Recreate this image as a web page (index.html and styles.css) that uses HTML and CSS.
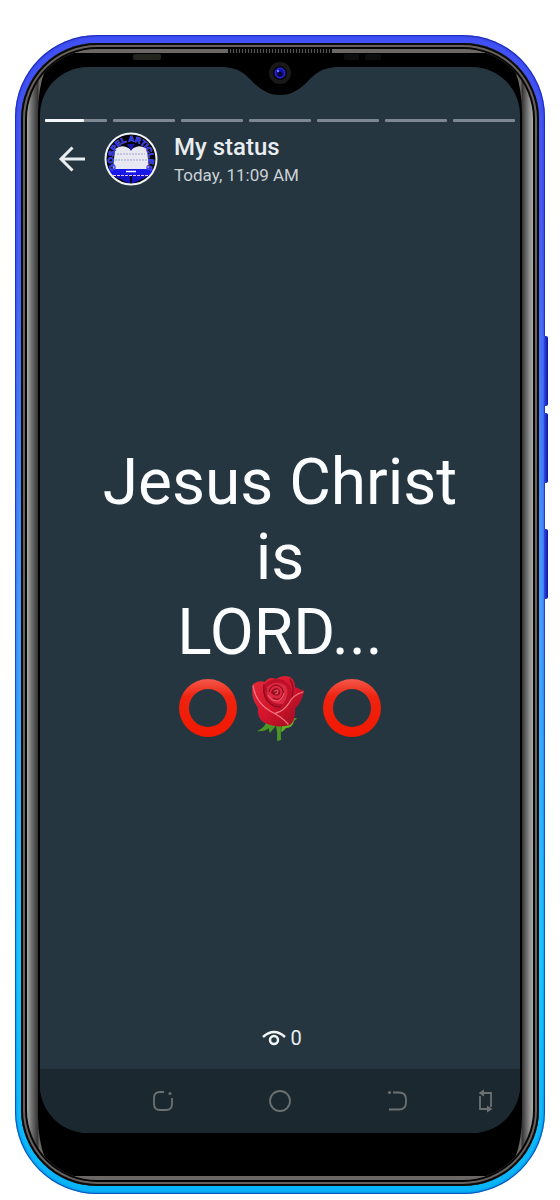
FILE: index.html
```
<!DOCTYPE html>
<html lang="en">
<head>
    <meta charset="UTF-8">
    <meta name="viewport" content="width=device-width, initial-scale=1.0">
    <title>My status</title>
    <link rel="stylesheet" href="styles.css">
</head>
<body>
    <div class="phone">
        <span class="side-key volume-up"></span>
        <span class="side-key volume-down"></span>
        <span class="side-key power"></span>
        <div class="rim">
            <div class="bezel">
                <div class="glass">
                    <div class="screen">
                        <div class="progress">
                            <span class="segment"><span class="fill" style="width: 63%"></span></span>
                            <span class="segment"></span>
                            <span class="segment"></span>
                            <span class="segment"></span>
                            <span class="segment"></span>
                            <span class="segment"></span>
                            <span class="segment"></span>
                        </div>

                        <header class="header">
                            <button class="back" aria-label="Back">
                                <svg width="28" height="28" viewBox="0 0 28 28" fill="none" stroke="#e9edef" stroke-width="3">
                                    <path d="M14.5 2.500 3 14l11.500 11.500M3 14h24"/>
                                </svg>
                            </button>
                            <svg class="avatar" width="54" height="54" viewBox="0 0 54 54">
                                <defs>
                                    <clipPath id="disc"><circle cx="27" cy="27" r="25"/></clipPath>
                                    <path id="arc" d="M14.600 39.400A17.500 17.500 0 1 1 39.400 39.400"/>
                                </defs>
                                <g clip-path="url(#disc)">
                                    <rect width="54" height="54" fill="#05050f"/>
                                    <path d="M11 17q8-6 16 1 8-7 16-1l2 20H9z" fill="#e8e8f2"/>
                                    <path d="M23 12h8l-4 7z" fill="#1518a8"/>
                                    <path d="M13 22h28M11 28h32" stroke="#9fa1cc" stroke-dasharray="2 1"/>
                                    <path d="M3 37h48v6H3z" fill="#1717e8"/>
                                    <path d="M8 43h18v9zM46 43H28v9z" fill="#1212c8"/>
                                    <path d="M22 39.500h10" stroke="#fff" stroke-width="1.500"/>
                                    <path d="M9 43.500h36" stroke="#e0bde8" stroke-dasharray="3 1"/>
                                </g>
                                <text class="avatar-text"><textPath href="#arc" startOffset="50%">GOSPEL ARTICLES</textPath></text>
                                <circle cx="27" cy="27" r="25.500" fill="none" stroke="#f0f3f5" stroke-width="2"/>
                            </svg>
                            <div class="titles">
                                <h1>My status</h1>
                                <p>Today, 11:09 AM</p>
                            </div>
                        </header>

                        <main class="message">
                            <p>Jesus Christ<br>is<br>LORD...</p>
                            <div class="emoji">
                                <svg width="58" height="58" viewBox="0 0 58 58">
                                    <defs>
                                        <linearGradient id="ring" x2="0" y2="1">
                                            <stop offset="0" stop-color="#f4584a"/>
                                            <stop offset=".3" stop-color="#ee2410"/>
                                            <stop offset="1" stop-color="#f21800"/>
                                        </linearGradient>
                                    </defs>
                                    <path fill="url(#ring)" fill-rule="evenodd" d="M29 0a29 29 0 1 1 0 58 29 29 0 0 1 0-58zm0 10a19 19 0 1 0 0 38 19 19 0 0 0 0-38z"/>
                                </svg>
                                <svg width="58" height="66" viewBox="0 0 58 66">
                                    <defs>
                                        <linearGradient id="petal" x2="1" y2="1">
                                            <stop offset="0" stop-color="#e52b3b"/>
                                            <stop offset=".5" stop-color="#d3152b"/>
                                            <stop offset="1" stop-color="#980b20"/>
                                        </linearGradient>
                                    </defs>
                                    <path d="M25 46h6q-2 9-1 19l-4 1q1-8-1-15-3 3-6 7-2-3-1-5-5 4-12 3 6-2 9-8z" fill="#4c9623"/>
                                    <path d="M31 49q4-5 15-6-3 2-4 6-2 4-7 4-2 3-5 4z" fill="#67ae27"/>
                                    <path d="M2 9Q8 5 14 7 18 1 25 4 32-1 39 2q5 3 5 10 5 2 9 4-2 11-9 18 1 11-5 16-14 4-27-3-6-5-5-14Q-1 22 2 9z" fill="url(#petal)"/>
                                    <path d="M14 9q8-7 18-4 8 4 9 14-2 11-10 18Q16 30 13 20q-2-6 1-11z" fill="#bd1029"/>
                                    <path d="M16 12q9-8 19-1 4 9-3 18-12 1-16-9z" fill="#dc2940"/>
                                    <path d="M2 11q3 17 17 25 12 6 18 13M52 17Q42 20 38 28 33 36 25 38" fill="none" stroke="#f27883" stroke-width="1.300" stroke-linecap="round"/>
                                    <path d="M13 9q-2 14 7 20 5 4 10 2M39 4q5 8 2 18M18 17q1-7 8-7 7 2 6 9-3 8-10 4" fill="none" stroke="#8c0a20" stroke-width="1.200"/>
                                    <path d="M20 18q1-5 6-5 4 2 3 6-4 4-9-1z" fill="#910b20"/>
                                    <path d="M23 17q2-3 4-1 0 3-3 3m-7 1q3 6 10 6 5-3 6-8" fill="none" stroke="#ed5868" stroke-width="1.200"/>
                                </svg>
                                <svg width="58" height="58" viewBox="0 0 58 58">
                                    <path fill="url(#ring)" fill-rule="evenodd" d="M29 0a29 29 0 1 1 0 58 29 29 0 0 1 0-58zm0 10a19 19 0 1 0 0 38 19 19 0 0 0 0-38z"/>
                                </svg>
                            </div>
                        </main>

                        <button class="viewers" aria-label="0 views">
                            <svg width="24" height="16" viewBox="0 0 24 16" fill="none" stroke="#f3f6f7" stroke-width="2.500">
                                <path d="M1 7Q12-3 23 7"/>
                                <circle cx="12" cy="10" r="4"/>
                            </svg>
                            <span>0</span>
                        </button>

                        <nav class="nav">
                            <button aria-label="Recent apps">
                                <svg width="24" height="24" viewBox="0 0 24 24">
                                    <path d="M13 3H9Q3 3 3 9v6q0 6 6 6h6q6 0 6-6V9"/>
                                    <circle class="dot" cx="19" cy="4.500" r="1.500"/>
                                </svg>
                            </button>
                            <button aria-label="Home">
                                <svg width="24" height="24" viewBox="0 0 24 24"><circle cx="12" cy="12" r="10"/></svg>
                            </button>
                            <button aria-label="Back">
                                <svg width="24" height="24" viewBox="0 0 24 24">
                                    <path d="M7 3.500h6q7 0 7 7v3q0 7-7 7H3"/>
                                    <circle class="dot" cx="3.500" cy="3.500" r="1.500"/>
                                </svg>
                            </button>
                            <button aria-label="Rotate screen">
                                <svg width="24" height="24" viewBox="0 0 24 24">
                                    <path d="M8 4h9v14M6 7v13h10"/>
                                    <path class="dot" d="M4.500 4 10 .500v7zM18.500 20 13 16.500v7z"/>
                                </svg>
                            </button>
                        </nav>

                        <svg class="notch" width="120" height="40" viewBox="0 0 120 40">
                            <path d="M0 12V11H120V12C98 12 93 22 84 30Q73 40 60 40T36 30C27 22 22 12 0 12z"/>
                            <circle cx="60" cy="18" r="11" fill="#191919"/>
                            <circle cx="60" cy="18" r="7" fill="#050510"/>
                            <circle cx="60" cy="18" r="5" fill="#1212ad" stroke="#3030e0"/>
                            <circle cx="60" cy="19" r="2.500" fill="#04042c"/>
                            <circle cx="58" cy="16" r="1.200" fill="#6d79ff"/>
                        </svg>
                    </div>
                </div>
            </div>
        </div>
        <span class="speaker"></span>
        <span class="sensor sensor-left"></span>
        <span class="sensor sensor-mid"></span>
        <span class="sensor sensor-right"></span>
    </div>
</body>
</html>
```

FILE: styles.css
```
* {
    box-sizing: border-box;
}
body {
    margin: 0;
    min-height: 100vh;
    padding: 35px 15px 6px;
    display: flex;
    background: #fff;
    color: #e9edef;
    font-family: Roboto, "Liberation Sans", sans-serif;
}
h1, p {
    margin: 0;
}
button {
    padding: 0;
    border: 0;
    background: none;
    color: inherit;
    font: inherit;
    cursor: pointer;
}
svg {
    display: block;
}

/* phone body, from the outside in */
.phone {
    position: relative;
    flex: 1;
    display: flex;
    padding: 8px 6px;
    border-radius: 82px;
    background: linear-gradient(to bottom, #4050f5, #4558f5 15%, #469cff 50%, #18c8ff 80%, #08b4fa);
    box-shadow: inset 0 0 0 1px rgba(0,20,150,0.5), inset 0 0 2px 2px rgba(0,20,150,0.2);
}
.rim {
    flex: 1;
    display: flex;
    padding: 6px;
    border-radius: 76px;
    background: #050505;
    box-shadow: inset 0 0 0 2px #0a0a0a, inset 0 0 0 4px #68625e;
}
.bezel {
    flex: 1;
    display: flex;
    padding: 4px 11px;
    border-radius: 70px;
    overflow: hidden;
    background: linear-gradient(to right, #a9adab, #777 4px, #333 11px, #6b6764 12px, #6b6764 calc(100% - 12px), #333 calc(100% - 11px), #888 calc(100% - 4px), #a9adab);
}
.glass {
    flex: 1;
    display: flex;
    padding: 14px 2px 43px;
    border-radius: 24px / 60px;
    background: #000;
}
.screen {
    position: relative;
    flex: 1;
    display: flex;
    flex-direction: column;
    padding-top: 52px;
    border-radius: 48px;
    background: #253640;
}
.side-key {
    position: absolute;
    right: -3px;
    width: 4px;
    height: 70px;
    border-radius: 0 2px 2px 0;
    background: linear-gradient(to right, #2e4be8, #1015a0);
}
.volume-up {
    top: 301px;
}
.volume-down {
    top: 378px;
}
.power {
    top: 494px;
}
.notch {
    position: absolute;
    top: -12px;
    left: 50%;
    transform: translateX(-50%);
}
.speaker {
    position: absolute;
    top: 14px;
    left: 50%;
    width: 104px;
    height: 4px;
    margin-left: -52px;
    background: repeating-linear-gradient(to right, #080808 0 2px, #555 2px 3px);
}
.sensor {
    position: absolute;
    top: 19px;
    height: 6px;
    border-radius: 2px;
    background: #0d0d0d;
}
.sensor-left {
    left: 118px;
    width: 28px;
    background: #24241f;
}
.sensor-mid {
    right: 186px;
    width: 15px;
}
.sensor-right {
    right: 164px;
    width: 16px;
}

/* status screen */
.progress {
    display: flex;
    gap: 6px;
    padding: 0 5px;
}
.segment {
    flex: 1;
    height: 3px;
    border-radius: 1px;
    background: #7c8791;
}
.fill {
    display: block;
    height: 100%;
    border-radius: 1px;
    background: #f3f5f6;
}
.header {
    display: flex;
    align-items: center;
    padding: 9px 18px 0;
}
.avatar {
    margin: 0 16px 0 18px;
}
.avatar-text {
    font: bold 8px "Liberation Sans", sans-serif;
    text-anchor: middle;
    fill: #2f33ff;
    stroke: #8088e0;
    stroke-width: 0.5px;
    paint-order: stroke;
}
.titles h1 {
    font-size: 24px;
    font-weight: 500;
    line-height: 32px;
}
.titles p {
    font-size: 17px;
    line-height: 24px;
    color: #cbd2d6;
}
.message {
    flex: 1;
    display: flex;
    flex-direction: column;
    justify-content: center;
    padding-bottom: 2px;
    text-align: center;
    font-size: 64px;
    line-height: 75px;
    color: #fbfdfe;
}
.emoji {
    display: flex;
    align-items: center;
    justify-content: center;
    gap: 14px;
    height: 75px;
}
.viewers {
    display: flex;
    align-items: center;
    justify-content: center;
    gap: 4px;
    padding: 21px 0 19px 4px;
    font-size: 20px;
    line-height: 24px;
}
.nav {
    display: grid;
    grid-template-columns: 2fr 2fr 2fr 1fr;
    height: 64px;
    padding: 0 5px 0 64px;
    border-radius: 0 0 48px 48px;
    background: #1c282f;
}
.nav button {
    display: flex;
    align-items: center;
    justify-content: center;
}
.nav svg {
    fill: none;
    stroke: #6b7073;
    stroke-width: 1.8;
}
.nav .dot {
    fill: #6b7073;
    stroke: none;
}
```
